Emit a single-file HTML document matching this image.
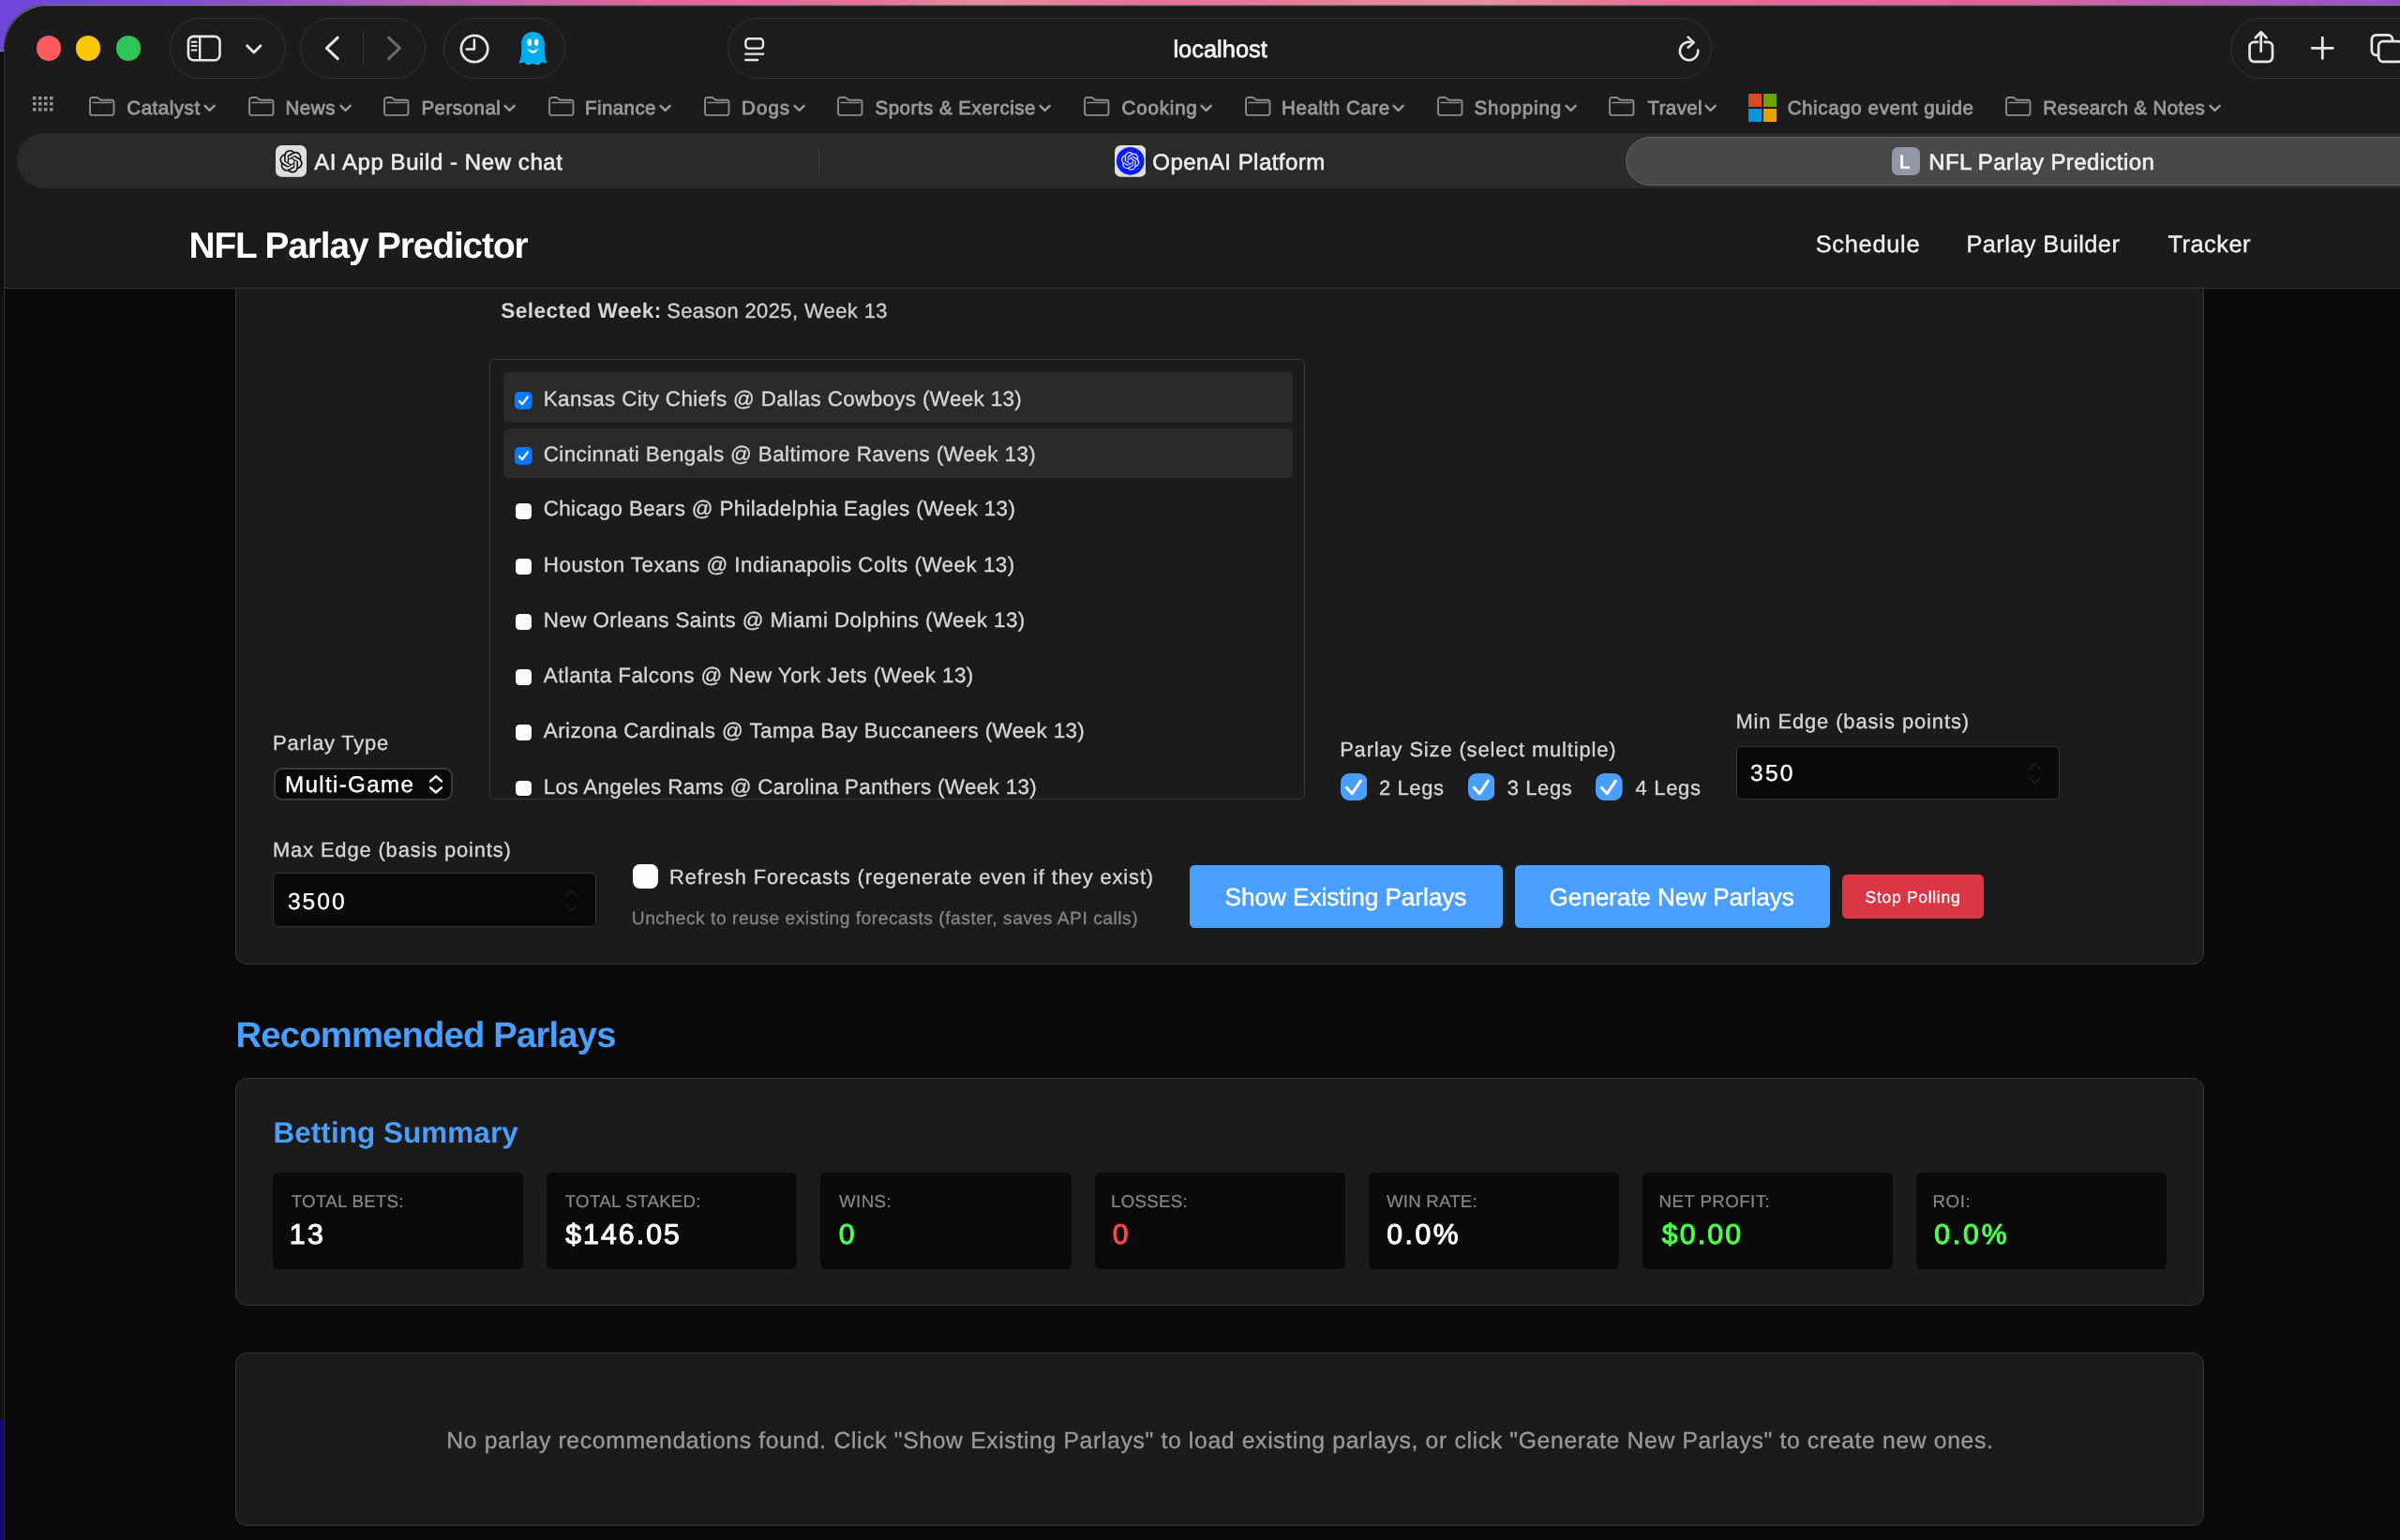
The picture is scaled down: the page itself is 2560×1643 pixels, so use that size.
<!DOCTYPE html>
<html lang="en"><head><meta charset="utf-8"><title>NFL Parlay Prediction</title>
<style>
*{margin:0;padding:0}
html,body{width:2560px;height:1643px;overflow:hidden;background:#0a0a0a}
body{position:relative;font-family:"Liberation Sans", Arial, sans-serif}
#root{position:absolute;left:0;top:0;width:2560px;height:1643px;overflow:hidden;will-change:transform}
#root div,#root span,#root svg,#root i,#root section,#root header,#root button,#root label,#root h1,#root h2,#root h3,#root a,#root p,#root strong{position:absolute;display:block}
button{border:0;padding:0;font:inherit;background:none;text-align:left;overflow:visible}
a{text-decoration:none}
#toolbar,#bookmarks,#tabbar,#page,#nav{left:0;top:0;width:0;height:0}
.t{white-space:pre;line-height:1;font-style:normal;text-rendering:geometricPrecision}
#desk{left:0;top:0;width:2560px;height:1643px;background:#141414}
#desk .grad{left:0;top:0;width:2560px;height:56px;background:linear-gradient(90deg,#6e47da 0,#7a4bd6 6%,#a758be 15%,#e0659c 26%,#e8709a 36%,#ea8a9e 41%,#e8709a 48%,#ea8c9c 62%,#e86c96 70%,#e0649e 84%,#b257c0 93%,#9a4fd0 100%)}
#desk .lstrip{left:0;top:54px;width:8px;height:1462px;background:#101010}
#desk .lline{left:0;top:53.500px;width:8px;height:1.200px;background:#9a9a9a}
#desk .lblue{left:0;top:1515px;width:8px;height:130px;background:#12087a}
#win{left:4.800px;top:4.600px;width:2700px;height:1800px;border-radius:45px;background:#1b1b1b;box-shadow:inset 0 1.200px 0 rgba(255,255,255,.42), -1px 0 0 #2e2e2e}
.tl{top:38.300px;width:26.600px;height:26.600px;border-radius:50%}
.ms{width:30px;height:30px}
.ms i{width:14.200px;height:14.200px}
.ms i:nth-child(2){left:15.800px}
.ms i:nth-child(3){top:15.800px}
.ms i:nth-child(4){left:15.800px;top:15.800px}
#pagebg{left:4.800px;top:260px;width:2560px;height:1500px;background:#0a0a0a}
#navbg{left:4.800px;top:201.600px;width:2560px;height:105px;background:#1b1b1b;border-bottom:1.800px solid #353535;box-sizing:content-box}
.card{background:#1b1b1b;border:1.600px solid #343434;border-radius:12px;box-sizing:border-box}
#card1{left:251.400px;top:250px;width:2099.600px;height:779.300px}
#card2{left:251.400px;top:1149.600px;width:2099.600px;height:243.600px}
#card3{left:251.400px;top:1443px;width:2099.600px;height:184.600px}
</style></head>
<body><div id="root">
<div id="desk"><div class="grad"></div><div class="lstrip"></div><div class="lline"></div><div class="lblue"></div></div>
<div id="win"></div>
<div id="toolbar">
<i class="tl" style="left:38.5px;background:#ff5a5e"></i>
<i class="tl" style="left:80.9px;background:#fcc803"></i>
<i class="tl" style="left:123.5px;background:#30c456"></i>
<div class="pill" style="left:181.0px;top:18.6px;width:124.0px;height:65.8px;border:1.6px solid #323232;border-radius:34px;box-sizing:border-box;background:#1c1c1c;"></div>
<div class="pill" style="left:320.0px;top:18.6px;width:134.4px;height:65.8px;border:1.6px solid #323232;border-radius:34px;box-sizing:border-box;background:#1c1c1c;"></div>
<div class="pill" style="left:473.0px;top:18.6px;width:129.8px;height:65.8px;border:1.6px solid #323232;border-radius:34px;box-sizing:border-box;background:#1c1c1c;"></div>
<div class="pill" style="left:776.0px;top:18.6px;width:1049.6px;height:65.8px;border:1.6px solid #323232;border-radius:34px;box-sizing:border-box;background:#1c1c1c;"></div>
<div class="pill" style="left:2379.0px;top:18.6px;width:281.0px;height:65.8px;border:1.6px solid #323232;border-radius:34px;box-sizing:border-box;background:#1c1c1c;"></div>
<svg style="left:196.0px;top:34.0px;" width="44" height="36" viewBox="0 0 44 36" fill="none"><rect x="4.9" y="4.9" width="33.6" height="25.4" rx="5.5" stroke="#e6e6e6" stroke-width="2.6"/><path d="M17.2 5v25.3" stroke="#e6e6e6" stroke-width="2.4"/><path d="M8.6 10.8h5M8.6 15.1h5M8.6 19.4h5" stroke="#e6e6e6" stroke-width="2" stroke-linecap="round"/></svg>
<svg style="left:258.0px;top:42.0px;" width="26" height="20" viewBox="0 0 26 20" fill="none"><path d="M5.6 6.8l7.2 7.2 7.2-7.2" stroke="#e6e6e6" stroke-width="2.8" stroke-linecap="round" stroke-linejoin="round"/></svg>
<svg style="left:340.0px;top:32.0px;" width="30" height="40" viewBox="0 0 30 40" fill="none"><path d="M20.2 8.2L8.4 19.4 20.2 30.6" stroke="#e6e6e6" stroke-width="3" stroke-linecap="round" stroke-linejoin="round"/></svg>
<div style="left:386.5px;top:33.5px;width:1.5px;height:36.2px;background:#343434;"></div>
<svg style="left:405.0px;top:32.0px;" width="30" height="40" viewBox="0 0 30 40" fill="none"><path d="M9.6 8.2L21.4 19.4 9.6 30.6" stroke="#6a6a6a" stroke-width="3" stroke-linecap="round" stroke-linejoin="round"/></svg>
<svg style="left:486.0px;top:32.0px;" width="40" height="40" viewBox="0 0 40 40" fill="none"><circle cx="20.1" cy="20" r="14.2" stroke="#e6e6e6" stroke-width="2.7"/><path d="M19.9 10.4v10.2h-8.2" stroke="#e6e6e6" stroke-width="2.5" stroke-linecap="round" stroke-linejoin="round"/></svg>
<svg style="left:540.0px;top:26.0px;" width="60" height="52" viewBox="0 0 60 52" fill="none"><path d="M28.5 7.9C21.300 7.9 16.200 13 16.200 20.600V29c0 4.500-1.200 8.800-2.700 11.900q3 .7 5.700-.7 1.800 3.200 4.300 3 2.500 0 5-1.100 2.500 1.100 4.900 1.100 2.600.2 4.300-3 2.800 1.400 5.700.7c-1.400-3.100-2.600-7.400-2.600-11.900V20.600C40.800 13 35.700 7.900 28.500 7.900z" fill="#00aef0"/><ellipse cx="24.800" cy="19.200" rx="2.250" ry="3.750" fill="#fff"/><ellipse cx="32.200" cy="19.200" rx="2.250" ry="3.750" fill="#fff"/><path d="M22.300 25.300Q28.500 36.500 34.800 25.300 28.500 31.100 22.300 25.300z" fill="#fff"/></svg>
<svg style="left:790.0px;top:36.0px;" width="30" height="34" viewBox="0 0 30 34" fill="none"><rect x="5.400" y="5.300" width="18.600" height="10.300" rx="3.200" stroke="#e6e6e6" stroke-width="2.4"/><path d="M5.200 21.700h19M5.200 28h13" stroke="#e6e6e6" stroke-width="2.300" stroke-linecap="round"/></svg>
<span class="t" id="t1" style="left:1251.40px;top:41.10px;font-size:25.4px;font-weight:400;color:#f4f4f4;letter-spacing:0.025px;-webkit-text-stroke:0.70px #f4f4f4;">localhost</span>
<svg style="left:1786.0px;top:34.0px;" width="32" height="36" viewBox="0 0 32 36" fill="none"><path d="M25.200 19.400A9.700 9.700 0 1 1 17.300 10.900" stroke="#e6e6e6" stroke-width="2.500" stroke-linecap="round"/><path d="M14.600 5.600l6.200 5.800-6.200 5.400" stroke="#e6e6e6" stroke-width="2.500" stroke-linecap="round" stroke-linejoin="round"/></svg>
<svg style="left:2394.0px;top:30.0px;" width="36" height="42" viewBox="0 0 36 42" fill="none"><path d="M14.200 14.800H10.400a4.800 4.800 0 0 0-4.800 4.800v11.500a4.800 4.800 0 0 0 4.800 4.800h14.800a4.800 4.800 0 0 0 4.800-4.800V19.600a4.800 4.800 0 0 0-4.800-4.800H21.600" stroke="#e6e6e6" stroke-width="2.700" stroke-linecap="round"/><path d="M17.700 25V4.600M11.800 10.200l5.900-5.900 5.900 5.900" stroke="#e6e6e6" stroke-width="2.700" stroke-linecap="round" stroke-linejoin="round"/></svg>
<svg style="left:2460.0px;top:34.0px;" width="34" height="34" viewBox="0 0 34 34" fill="none"><path d="M17.300 6.200v22.200M6.200 17.300h22.200" stroke="#e6e6e6" stroke-width="2.800" stroke-linecap="round"/></svg>
<svg style="left:2524.0px;top:32.0px;" width="40" height="40" viewBox="0 0 40 40" fill="none"><path d="M13.150 26.850H10.650a4.800 4.800 0 0 1-4.800-4.800V10.150a4.800 4.800 0 0 1 4.800-4.800H23.150a4.800 4.800 0 0 1 4.800 4.800V12.050" stroke="#e6e6e6" stroke-width="2.700"/><rect x="13.150" y="12.050" width="26" height="21.850" rx="4.800" stroke="#e6e6e6" stroke-width="2.700"/></svg>
</div>
<div id="bookmarks">
<svg style="left:34.9px;top:102.8px;" width="24" height="18" viewBox="0 0 24 18" fill="none"><g fill="#929292"><rect x="0.0" y="0.0" width="3.500" height="3.500"/><rect x="6.0" y="0.0" width="3.500" height="3.500"/><rect x="12.0" y="0.0" width="3.500" height="3.500"/><rect x="18.0" y="0.0" width="3.500" height="3.500"/><rect x="0.0" y="6.0" width="3.500" height="3.500"/><rect x="6.0" y="6.0" width="3.500" height="3.500"/><rect x="12.0" y="6.0" width="3.500" height="3.500"/><rect x="18.0" y="6.0" width="3.500" height="3.500"/><rect x="0.0" y="12.1" width="3.500" height="3.500"/><rect x="6.0" y="12.1" width="3.500" height="3.500"/><rect x="12.0" y="12.1" width="3.500" height="3.500"/><rect x="18.0" y="12.1" width="3.500" height="3.500"/></g></svg>
<svg style="left:94.0px;top:102.0px;" width="31" height="24" viewBox="0 0 31 24" fill="none"><path d="M2.050 6.500V4.400a2.450 2.450 0 0 1 2.450-2.450h4.300c.9 0 1.600.3 2.200.9l1 .9c.6.600 1.300.95 2.200.95h10.800a2.450 2.450 0 0 1 2.450 2.450v11.250a2.450 2.450 0 0 1-2.450 2.450H4.500a2.450 2.450 0 0 1-2.450-2.450z" stroke="#8a8a8a" stroke-width="1.900"/><path d="M5 7.500h20" stroke="#8a8a8a" stroke-width="1.600" stroke-linecap="round"/></svg>
<span class="t" id="t2" style="left:135.30px;top:105.65px;font-size:20.5px;font-weight:400;color:#999999;letter-spacing:0.536px;-webkit-text-stroke:0.80px #999999;">Catalyst</span>
<svg style="left:217.2px;top:111.0px;" width="16" height="12" viewBox="0 0 16 12" fill="none"><path d="M1.600 1.800l5 5 5-5" stroke="#9a9a9a" stroke-width="2.500" stroke-linecap="round" stroke-linejoin="round"/></svg>
<svg style="left:263.9px;top:102.0px;" width="31" height="24" viewBox="0 0 31 24" fill="none"><path d="M2.050 6.500V4.400a2.450 2.450 0 0 1 2.450-2.450h4.300c.9 0 1.600.3 2.200.9l1 .9c.6.600 1.300.95 2.200.95h10.800a2.450 2.450 0 0 1 2.450 2.450v11.250a2.450 2.450 0 0 1-2.450 2.450H4.500a2.450 2.450 0 0 1-2.450-2.450z" stroke="#8a8a8a" stroke-width="1.900"/><path d="M5 7.500h20" stroke="#8a8a8a" stroke-width="1.600" stroke-linecap="round"/></svg>
<span class="t" id="t3" style="left:304.40px;top:105.65px;font-size:20.5px;font-weight:400;color:#999999;letter-spacing:0.600px;-webkit-text-stroke:0.80px #999999;">News</span>
<svg style="left:361.9px;top:111.0px;" width="16" height="12" viewBox="0 0 16 12" fill="none"><path d="M1.600 1.800l5 5 5-5" stroke="#9a9a9a" stroke-width="2.500" stroke-linecap="round" stroke-linejoin="round"/></svg>
<svg style="left:407.9px;top:102.0px;" width="31" height="24" viewBox="0 0 31 24" fill="none"><path d="M2.050 6.500V4.400a2.450 2.450 0 0 1 2.450-2.450h4.300c.9 0 1.600.3 2.200.9l1 .9c.6.600 1.300.95 2.200.95h10.800a2.450 2.450 0 0 1 2.450 2.450v11.250a2.450 2.450 0 0 1-2.450 2.450H4.500a2.450 2.450 0 0 1-2.450-2.450z" stroke="#8a8a8a" stroke-width="1.900"/><path d="M5 7.500h20" stroke="#8a8a8a" stroke-width="1.600" stroke-linecap="round"/></svg>
<span class="t" id="t4" style="left:449.40px;top:105.65px;font-size:20.5px;font-weight:400;color:#999999;letter-spacing:0.507px;-webkit-text-stroke:0.80px #999999;">Personal</span>
<svg style="left:536.5px;top:111.0px;" width="16" height="12" viewBox="0 0 16 12" fill="none"><path d="M1.600 1.800l5 5 5-5" stroke="#9a9a9a" stroke-width="2.500" stroke-linecap="round" stroke-linejoin="round"/></svg>
<svg style="left:583.9px;top:102.0px;" width="31" height="24" viewBox="0 0 31 24" fill="none"><path d="M2.050 6.500V4.400a2.450 2.450 0 0 1 2.450-2.450h4.300c.9 0 1.600.3 2.200.9l1 .9c.6.600 1.300.95 2.200.95h10.800a2.450 2.450 0 0 1 2.450 2.450v11.250a2.450 2.450 0 0 1-2.450 2.450H4.500a2.450 2.450 0 0 1-2.450-2.450z" stroke="#8a8a8a" stroke-width="1.900"/><path d="M5 7.500h20" stroke="#8a8a8a" stroke-width="1.600" stroke-linecap="round"/></svg>
<span class="t" id="t5" style="left:624.10px;top:105.65px;font-size:20.5px;font-weight:400;color:#999999;letter-spacing:0.408px;-webkit-text-stroke:0.80px #999999;">Finance</span>
<svg style="left:703.2px;top:111.0px;" width="16" height="12" viewBox="0 0 16 12" fill="none"><path d="M1.600 1.800l5 5 5-5" stroke="#9a9a9a" stroke-width="2.500" stroke-linecap="round" stroke-linejoin="round"/></svg>
<svg style="left:749.9px;top:102.0px;" width="31" height="24" viewBox="0 0 31 24" fill="none"><path d="M2.050 6.500V4.400a2.450 2.450 0 0 1 2.450-2.450h4.300c.9 0 1.600.3 2.200.9l1 .9c.6.600 1.300.95 2.200.95h10.800a2.450 2.450 0 0 1 2.450 2.450v11.250a2.450 2.450 0 0 1-2.450 2.450H4.500a2.450 2.450 0 0 1-2.450-2.450z" stroke="#8a8a8a" stroke-width="1.900"/><path d="M5 7.500h20" stroke="#8a8a8a" stroke-width="1.600" stroke-linecap="round"/></svg>
<span class="t" id="t6" style="left:791.10px;top:105.65px;font-size:20.5px;font-weight:400;color:#999999;letter-spacing:1.050px;-webkit-text-stroke:0.80px #999999;">Dogs</span>
<svg style="left:846.2px;top:111.0px;" width="16" height="12" viewBox="0 0 16 12" fill="none"><path d="M1.600 1.800l5 5 5-5" stroke="#9a9a9a" stroke-width="2.500" stroke-linecap="round" stroke-linejoin="round"/></svg>
<svg style="left:892.2px;top:102.0px;" width="31" height="24" viewBox="0 0 31 24" fill="none"><path d="M2.050 6.500V4.400a2.450 2.450 0 0 1 2.450-2.450h4.300c.9 0 1.600.3 2.200.9l1 .9c.6.600 1.300.95 2.200.95h10.800a2.450 2.450 0 0 1 2.450 2.450v11.250a2.450 2.450 0 0 1-2.450 2.450H4.500a2.450 2.450 0 0 1-2.450-2.450z" stroke="#8a8a8a" stroke-width="1.900"/><path d="M5 7.500h20" stroke="#8a8a8a" stroke-width="1.600" stroke-linecap="round"/></svg>
<span class="t" id="t7" style="left:933.50px;top:105.65px;font-size:20.5px;font-weight:400;color:#999999;letter-spacing:0.500px;-webkit-text-stroke:0.80px #999999;">Sports &amp; Exercise</span>
<svg style="left:1107.9px;top:111.0px;" width="16" height="12" viewBox="0 0 16 12" fill="none"><path d="M1.600 1.800l5 5 5-5" stroke="#9a9a9a" stroke-width="2.500" stroke-linecap="round" stroke-linejoin="round"/></svg>
<svg style="left:1154.9px;top:102.0px;" width="31" height="24" viewBox="0 0 31 24" fill="none"><path d="M2.050 6.500V4.400a2.450 2.450 0 0 1 2.450-2.450h4.300c.9 0 1.600.3 2.200.9l1 .9c.6.600 1.300.95 2.200.95h10.800a2.450 2.450 0 0 1 2.450 2.450v11.250a2.450 2.450 0 0 1-2.450 2.450H4.500a2.450 2.450 0 0 1-2.450-2.450z" stroke="#8a8a8a" stroke-width="1.900"/><path d="M5 7.500h20" stroke="#8a8a8a" stroke-width="1.600" stroke-linecap="round"/></svg>
<span class="t" id="t8" style="left:1196.60px;top:105.65px;font-size:20.5px;font-weight:400;color:#999999;letter-spacing:0.825px;-webkit-text-stroke:0.80px #999999;">Cooking</span>
<svg style="left:1280.2px;top:111.0px;" width="16" height="12" viewBox="0 0 16 12" fill="none"><path d="M1.600 1.800l5 5 5-5" stroke="#9a9a9a" stroke-width="2.500" stroke-linecap="round" stroke-linejoin="round"/></svg>
<svg style="left:1326.6px;top:102.0px;" width="31" height="24" viewBox="0 0 31 24" fill="none"><path d="M2.050 6.500V4.400a2.450 2.450 0 0 1 2.450-2.450h4.300c.9 0 1.600.3 2.200.9l1 .9c.6.600 1.300.95 2.200.95h10.800a2.450 2.450 0 0 1 2.450 2.450v11.250a2.450 2.450 0 0 1-2.450 2.450H4.500a2.450 2.450 0 0 1-2.450-2.450z" stroke="#8a8a8a" stroke-width="1.900"/><path d="M5 7.500h20" stroke="#8a8a8a" stroke-width="1.600" stroke-linecap="round"/></svg>
<span class="t" id="t9" style="left:1367.10px;top:105.65px;font-size:20.5px;font-weight:400;color:#999999;letter-spacing:0.565px;-webkit-text-stroke:0.80px #999999;">Health Care</span>
<svg style="left:1485.2px;top:111.0px;" width="16" height="12" viewBox="0 0 16 12" fill="none"><path d="M1.600 1.800l5 5 5-5" stroke="#9a9a9a" stroke-width="2.500" stroke-linecap="round" stroke-linejoin="round"/></svg>
<svg style="left:1531.9px;top:102.0px;" width="31" height="24" viewBox="0 0 31 24" fill="none"><path d="M2.050 6.500V4.400a2.450 2.450 0 0 1 2.450-2.450h4.300c.9 0 1.600.3 2.200.9l1 .9c.6.600 1.300.95 2.200.95h10.800a2.450 2.450 0 0 1 2.450 2.450v11.250a2.450 2.450 0 0 1-2.450 2.450H4.500a2.450 2.450 0 0 1-2.450-2.450z" stroke="#8a8a8a" stroke-width="1.900"/><path d="M5 7.500h20" stroke="#8a8a8a" stroke-width="1.600" stroke-linecap="round"/></svg>
<span class="t" id="t10" style="left:1572.55px;top:105.65px;font-size:20.5px;font-weight:400;color:#999999;letter-spacing:0.843px;-webkit-text-stroke:0.80px #999999;">Shopping</span>
<svg style="left:1668.7px;top:111.0px;" width="16" height="12" viewBox="0 0 16 12" fill="none"><path d="M1.600 1.800l5 5 5-5" stroke="#9a9a9a" stroke-width="2.500" stroke-linecap="round" stroke-linejoin="round"/></svg>
<svg style="left:1714.8px;top:102.0px;" width="31" height="24" viewBox="0 0 31 24" fill="none"><path d="M2.050 6.500V4.400a2.450 2.450 0 0 1 2.450-2.450h4.300c.9 0 1.600.3 2.200.9l1 .9c.6.600 1.300.95 2.200.95h10.800a2.450 2.450 0 0 1 2.450 2.450v11.250a2.450 2.450 0 0 1-2.450 2.450H4.500a2.450 2.450 0 0 1-2.450-2.450z" stroke="#8a8a8a" stroke-width="1.900"/><path d="M5 7.500h20" stroke="#8a8a8a" stroke-width="1.600" stroke-linecap="round"/></svg>
<span class="t" id="t11" style="left:1757.50px;top:105.65px;font-size:20.5px;font-weight:400;color:#999999;letter-spacing:0.390px;-webkit-text-stroke:0.80px #999999;">Travel</span>
<svg style="left:1818.0px;top:111.0px;" width="16" height="12" viewBox="0 0 16 12" fill="none"><path d="M1.600 1.800l5 5 5-5" stroke="#9a9a9a" stroke-width="2.500" stroke-linecap="round" stroke-linejoin="round"/></svg>
<div class="ms" style="left:1864.9px;top:99.8px"><i style="background:#d84a20"></i><i style="background:#6ca204"></i><i style="background:#0596d8"></i><i style="background:#e0a204"></i></div>
<span class="t" id="t12" style="left:1906.65px;top:105.65px;font-size:20.5px;font-weight:400;color:#999999;letter-spacing:0.631px;-webkit-text-stroke:0.80px #999999;">Chicago event guide</span>
<svg style="left:2138.3px;top:102.0px;" width="31" height="24" viewBox="0 0 31 24" fill="none"><path d="M2.050 6.500V4.400a2.450 2.450 0 0 1 2.450-2.450h4.300c.9 0 1.600.3 2.200.9l1 .9c.6.600 1.300.95 2.200.95h10.800a2.450 2.450 0 0 1 2.450 2.450v11.250a2.450 2.450 0 0 1-2.450 2.450H4.500a2.450 2.450 0 0 1-2.450-2.450z" stroke="#8a8a8a" stroke-width="1.900"/><path d="M5 7.500h20" stroke="#8a8a8a" stroke-width="1.600" stroke-linecap="round"/></svg>
<span class="t" id="t13" style="left:2179.25px;top:105.65px;font-size:20.5px;font-weight:400;color:#999999;letter-spacing:0.410px;-webkit-text-stroke:0.80px #999999;">Research &amp; Notes</span>
<svg style="left:2356.0px;top:111.0px;" width="16" height="12" viewBox="0 0 16 12" fill="none"><path d="M1.600 1.800l5 5 5-5" stroke="#9a9a9a" stroke-width="2.500" stroke-linecap="round" stroke-linejoin="round"/></svg>
</div>
<div id="tabbar">
<div style="left:18.0px;top:142.3px;width:2642.0px;height:58.9px;background:#2a2a2a;border-radius:29.400px;"></div>
<div style="left:872.5px;top:157.0px;width:1.5px;height:30.0px;background:#3e3e3e;"></div>
<div style="left:1733.6px;top:146.0px;width:926.4px;height:52.0px;background:#484848;border:1.5px solid #656565;border-radius:26px;box-sizing:border-box;"></div>
<svg style="left:294.0px;top:155.0px;" width="33" height="33.7" viewBox="0 0 33 33.7" fill="none"><rect width="33" height="33.700" rx="6.500" fill="#dedede"/><g transform="translate(4.300 5) scale(1.020)"><path d="M22.2819 9.8211a5.9847 5.9847 0 0 0-.5157-4.9108 6.0462 6.0462 0 0 0-6.5098-2.9A6.0651 6.0651 0 0 0 4.9807 4.1818a5.9847 5.9847 0 0 0-3.9977 2.9 6.0462 6.0462 0 0 0 .7427 7.0966 5.98 5.98 0 0 0 .511 4.9107 6.051 6.051 0 0 0 6.5146 2.9001A5.9847 5.9847 0 0 0 13.2599 24a6.0557 6.0557 0 0 0 5.7718-4.2058 5.9894 5.9894 0 0 0 3.9977-2.9001 6.0557 6.0557 0 0 0-.7475-7.0729zm-9.022 12.6081a4.4755 4.4755 0 0 1-2.8764-1.0408l.1419-.0804 4.7783-2.7582a.7948.7948 0 0 0 .3927-.6813v-6.7369l2.02 1.1686a.071.071 0 0 1 .038.052v5.5826a4.504 4.504 0 0 1-4.4945 4.4944zm-9.6607-4.1254a4.4708 4.4708 0 0 1-.5346-3.0137l.142.0852 4.783 2.7582a.7712.7712 0 0 0 .7806 0l5.8428-3.3685v2.3324a.0804.0804 0 0 1-.0332.0615L9.74 19.9502a4.4992 4.4992 0 0 1-6.1408-1.6464zM2.3408 7.8956a4.485 4.485 0 0 1 2.3655-1.9728V11.6a.7664.7664 0 0 0 .3879.6765l5.8144 3.3543-2.0201 1.1685a.0757.0757 0 0 1-.071 0l-4.8303-2.7865A4.504 4.504 0 0 1 2.3408 7.872zm16.5963 3.8558L13.1038 8.364 15.1192 7.2a.0757.0757 0 0 1 .071 0l4.8303 2.7913a4.4944 4.4944 0 0 1-.6765 8.1042v-5.6772a.79.79 0 0 0-.407-.667zm2.0107-3.0231l-.142-.0852-4.7735-2.7818a.7759.7759 0 0 0-.7854 0L9.409 9.2297V6.8974a.0662.0662 0 0 1 .0284-.0615l4.8303-2.7866a4.4992 4.4992 0 0 1 6.6802 4.66zM8.3065 12.863l-2.02-1.1638a.0804.0804 0 0 1-.038-.0567V6.0742a4.4992 4.4992 0 0 1 7.3757-3.4537l-.142.0805L8.704 5.459a.7948.7948 0 0 0-.3927.6813zm1.0976-2.3654l2.602-1.4998 2.6069 1.4998v2.9994l-2.5974 1.4997-2.6067-1.4997Z" fill="#111"/></g></svg>
<span class="t" id="t14" style="left:335.25px;top:162.18px;font-size:24.0px;font-weight:400;color:#ececec;letter-spacing:0.568px;-webkit-text-stroke:0.60px #ececec;">AI App Build - New chat</span>
<svg style="left:1188.5px;top:155.0px;" width="33.5" height="33.7" viewBox="0 0 33.5 33.7" fill="none"><rect width="33.500" height="33.700" rx="6.500" fill="#dedede"/><circle cx="16.700" cy="16.850" r="14.850" fill="#0a1cff"/><g transform="translate(7 7.100) scale(0.810)"><path d="M22.2819 9.8211a5.9847 5.9847 0 0 0-.5157-4.9108 6.0462 6.0462 0 0 0-6.5098-2.9A6.0651 6.0651 0 0 0 4.9807 4.1818a5.9847 5.9847 0 0 0-3.9977 2.9 6.0462 6.0462 0 0 0 .7427 7.0966 5.98 5.98 0 0 0 .511 4.9107 6.051 6.051 0 0 0 6.5146 2.9001A5.9847 5.9847 0 0 0 13.2599 24a6.0557 6.0557 0 0 0 5.7718-4.2058 5.9894 5.9894 0 0 0 3.9977-2.9001 6.0557 6.0557 0 0 0-.7475-7.0729zm-9.022 12.6081a4.4755 4.4755 0 0 1-2.8764-1.0408l.1419-.0804 4.7783-2.7582a.7948.7948 0 0 0 .3927-.6813v-6.7369l2.02 1.1686a.071.071 0 0 1 .038.052v5.5826a4.504 4.504 0 0 1-4.4945 4.4944zm-9.6607-4.1254a4.4708 4.4708 0 0 1-.5346-3.0137l.142.0852 4.783 2.7582a.7712.7712 0 0 0 .7806 0l5.8428-3.3685v2.3324a.0804.0804 0 0 1-.0332.0615L9.74 19.9502a4.4992 4.4992 0 0 1-6.1408-1.6464zM2.3408 7.8956a4.485 4.485 0 0 1 2.3655-1.9728V11.6a.7664.7664 0 0 0 .3879.6765l5.8144 3.3543-2.0201 1.1685a.0757.0757 0 0 1-.071 0l-4.8303-2.7865A4.504 4.504 0 0 1 2.3408 7.872zm16.5963 3.8558L13.1038 8.364 15.1192 7.2a.0757.0757 0 0 1 .071 0l4.8303 2.7913a4.4944 4.4944 0 0 1-.6765 8.1042v-5.6772a.79.79 0 0 0-.407-.667zm2.0107-3.0231l-.142-.0852-4.7735-2.7818a.7759.7759 0 0 0-.7854 0L9.409 9.2297V6.8974a.0662.0662 0 0 1 .0284-.0615l4.8303-2.7866a4.4992 4.4992 0 0 1 6.6802 4.66zM8.3065 12.863l-2.02-1.1638a.0804.0804 0 0 1-.038-.0567V6.0742a4.4992 4.4992 0 0 1 7.3757-3.4537l-.142.0805L8.704 5.459a.7948.7948 0 0 0-.3927.6813zm1.0976-2.3654l2.602-1.4998 2.6069 1.4998v2.9994l-2.5974 1.4997-2.6067-1.4997Z" fill="#dfe3ff"/></g></svg>
<span class="t" id="t15" style="left:1229.35px;top:162.18px;font-size:24.0px;font-weight:400;color:#ececec;letter-spacing:0.461px;-webkit-text-stroke:0.60px #ececec;">OpenAI Platform</span>
<div style="left:2018.3px;top:157.0px;width:29.4px;height:29.7px;background:#9496a6;border-radius:6.500px;"></div>
<span class="t" id="t16" style="left:2026.35px;top:162.32px;font-size:21.6px;font-weight:700;color:#ffffff;transform:scaleX(.88);transform-origin:0 0;">L</span>
<span class="t" id="t17" style="left:2057.15px;top:162.18px;font-size:24.0px;font-weight:400;color:#f0f0f0;letter-spacing:0.403px;-webkit-text-stroke:0.60px #f0f0f0;">NFL Parlay Prediction</span>
</div>
<div id="page"><div id="pagebg"></div>
<section id="card1" class="card">
</section>
<strong class="t" id="t18" style="left:534.25px;top:320.87px;font-size:22.6px;font-weight:700;color:#d6d6d6;letter-spacing:0.446px;">Selected Week:</strong>
<span class="t" id="t19" style="left:711.20px;top:320.96px;font-size:21.9px;font-weight:400;color:#cfcfcf;letter-spacing:0.426px;-webkit-text-stroke:0.35px #cfcfcf;">Season 2025, Week 13</span>
<div class="listbox" style="left:522.0px;top:383.0px;width:870.0px;height:470.4px;border:1.600px solid #3a3a3a;border-radius:5.400px;box-sizing:border-box;"></div>
<label class="row" style="left:537.0px;top:397.4px;width:841.5px;height:53.3px;border-radius:5.4px;background:#2a2a2a;">
<svg style="left:12.0px;top:20.4px;" width="19" height="19" viewBox="0 0 19 19" fill="none"><rect width="18.700" height="18.700" rx="4.800" fill="#0a7aff"/><path d="M4.900 9.800l3.100 3.500 5.800-7.800" stroke="#fff" stroke-width="2.200" stroke-linecap="round" stroke-linejoin="round"/></svg>
<span class="t" id="t20" style="left:42.80px;top:17.24px;font-size:22.4px;font-weight:400;color:#d6d6d6;letter-spacing:0.364px;-webkit-text-stroke:0.35px #d6d6d6;">Kansas City Chiefs @ Dallas Cowboys (Week 13)</span>
</label>
<label class="row" style="left:537.0px;top:456.5px;width:841.5px;height:53.3px;border-radius:5.4px;background:#2a2a2a;">
<svg style="left:12.0px;top:20.4px;" width="19" height="19" viewBox="0 0 19 19" fill="none"><rect width="18.700" height="18.700" rx="4.800" fill="#0a7aff"/><path d="M4.900 9.800l3.100 3.500 5.800-7.800" stroke="#fff" stroke-width="2.200" stroke-linecap="round" stroke-linejoin="round"/></svg>
<span class="t" id="t21" style="left:42.80px;top:17.52px;font-size:22.4px;font-weight:400;color:#d6d6d6;letter-spacing:0.402px;-webkit-text-stroke:0.35px #d6d6d6;">Cincinnati Bengals @ Baltimore Ravens (Week 13)</span>
</label>
<label class="row" style="left:537.0px;top:515.7px;width:841.5px;height:53.3px;border-radius:5.4px;">
<div class="cb" style="left:13.0px;top:21.3px;width:16.6px;height:16.6px;background:#fbfbfb;border-radius:4.300px;"></div>
<span class="t" id="t22" style="left:42.80px;top:16.80px;font-size:22.4px;font-weight:400;color:#d6d6d6;letter-spacing:0.347px;-webkit-text-stroke:0.35px #d6d6d6;">Chicago Bears @ Philadelphia Eagles (Week 13)</span>
</label>
<label class="row" style="left:537.0px;top:574.8px;width:841.5px;height:53.3px;border-radius:5.4px;">
<div class="cb" style="left:13.0px;top:21.3px;width:16.6px;height:16.6px;background:#fbfbfb;border-radius:4.300px;"></div>
<span class="t" id="t23" style="left:42.80px;top:17.08px;font-size:22.4px;font-weight:400;color:#d6d6d6;letter-spacing:0.483px;-webkit-text-stroke:0.35px #d6d6d6;">Houston Texans @ Indianapolis Colts (Week 13)</span>
</label>
<label class="row" style="left:537.0px;top:634.0px;width:841.5px;height:53.3px;border-radius:5.4px;">
<div class="cb" style="left:13.0px;top:21.3px;width:16.6px;height:16.6px;background:#fbfbfb;border-radius:4.300px;"></div>
<span class="t" id="t24" style="left:42.80px;top:17.36px;font-size:22.4px;font-weight:400;color:#d6d6d6;letter-spacing:0.415px;-webkit-text-stroke:0.35px #d6d6d6;">New Orleans Saints @ Miami Dolphins (Week 13)</span>
</label>
<label class="row" style="left:537.0px;top:693.1px;width:841.5px;height:53.3px;border-radius:5.4px;">
<div class="cb" style="left:13.0px;top:21.3px;width:16.6px;height:16.6px;background:#fbfbfb;border-radius:4.300px;"></div>
<span class="t" id="t25" style="left:42.80px;top:16.64px;font-size:22.4px;font-weight:400;color:#d6d6d6;letter-spacing:0.450px;-webkit-text-stroke:0.35px #d6d6d6;">Atlanta Falcons @ New York Jets (Week 13)</span>
</label>
<label class="row" style="left:537.0px;top:752.2px;width:841.5px;height:53.3px;border-radius:5.4px;">
<div class="cb" style="left:13.0px;top:21.3px;width:16.6px;height:16.6px;background:#fbfbfb;border-radius:4.300px;"></div>
<span class="t" id="t26" style="left:42.80px;top:16.92px;font-size:22.4px;font-weight:400;color:#d6d6d6;letter-spacing:0.408px;-webkit-text-stroke:0.35px #d6d6d6;">Arizona Cardinals @ Tampa Bay Buccaneers (Week 13)</span>
</label>
<label class="row" style="left:537.0px;top:811.4px;width:841.5px;height:53.3px;border-radius:5.4px;">
<div class="cb" style="left:13.0px;top:21.3px;width:16.6px;height:16.6px;background:#fbfbfb;border-radius:4.300px;"></div>
<span class="t" id="t27" style="left:42.80px;top:17.20px;font-size:22.4px;font-weight:400;color:#d6d6d6;letter-spacing:0.350px;-webkit-text-stroke:0.35px #d6d6d6;">Los Angeles Rams @ Carolina Panthers (Week 13)</span>
</label>
<label class="t" id="t28" style="left:291.10px;top:782.16px;font-size:21.9px;font-weight:400;color:#d6d6d6;letter-spacing:0.785px;-webkit-text-stroke:0.35px #d6d6d6;">Parlay Type</label>
<div style="left:291.5px;top:819.0px;width:191.6px;height:34.6px;background:#090909;border:2px solid #3a3a3a;border-radius:9px;box-sizing:border-box;"></div>
<span class="t" id="t29" style="left:303.90px;top:825.81px;font-size:24.2px;font-weight:400;color:#ffffff;letter-spacing:1.339px;-webkit-text-stroke:0.35px #ffffff;">Multi-Game</span>
<svg style="left:455.0px;top:824.0px;" width="20" height="26" viewBox="0 0 20 26" fill="none"><path d="M4.100 9.400L10 4.300l5.900 5.100M4.100 16.400l5.900 5.100 5.900-5.100" stroke="#f0f0f0" stroke-width="2.500" stroke-linecap="round" stroke-linejoin="round"/></svg>
<label class="t" id="t30" style="left:1429.15px;top:789.06px;font-size:21.9px;font-weight:400;color:#d6d6d6;letter-spacing:0.873px;-webkit-text-stroke:0.35px #d6d6d6;">Parlay Size (select multiple)</label>
<svg style="left:1429.9px;top:825.0px;" width="28.6" height="29.1" viewBox="0 0 28.6 29.1" fill="none"><rect width="28.600" height="29.100" rx="9.600" fill="#4a9eff"/><path d="M6.300 15.300l5.900 6.500 9.100-13.600" stroke="#fff" stroke-width="3" stroke-linecap="round" stroke-linejoin="round"/></svg>
<span class="t" id="t31" style="left:1471.05px;top:829.86px;font-size:21.9px;font-weight:400;color:#d6d6d6;letter-spacing:0.630px;-webkit-text-stroke:0.35px #d6d6d6;">2 Legs</span>
<svg style="left:1565.6px;top:825.0px;" width="28.6" height="29.1" viewBox="0 0 28.6 29.1" fill="none"><rect width="28.600" height="29.100" rx="9.600" fill="#4a9eff"/><path d="M6.300 15.300l5.900 6.500 9.100-13.600" stroke="#fff" stroke-width="3" stroke-linecap="round" stroke-linejoin="round"/></svg>
<span class="t" id="t32" style="left:1607.65px;top:829.86px;font-size:21.9px;font-weight:400;color:#d6d6d6;letter-spacing:0.660px;-webkit-text-stroke:0.35px #d6d6d6;">3 Legs</span>
<svg style="left:1702.2px;top:825.0px;" width="28.6" height="29.1" viewBox="0 0 28.6 29.1" fill="none"><rect width="28.600" height="29.100" rx="9.600" fill="#4a9eff"/><path d="M6.300 15.300l5.900 6.500 9.100-13.600" stroke="#fff" stroke-width="3" stroke-linecap="round" stroke-linejoin="round"/></svg>
<span class="t" id="t33" style="left:1744.55px;top:829.86px;font-size:21.9px;font-weight:400;color:#d6d6d6;letter-spacing:0.730px;-webkit-text-stroke:0.35px #d6d6d6;">4 Legs</span>
<label class="t" id="t34" style="left:1851.45px;top:759.16px;font-size:21.9px;font-weight:400;color:#d6d6d6;letter-spacing:0.904px;-webkit-text-stroke:0.35px #d6d6d6;">Min Edge (basis points)</label>
<div style="left:1851.9px;top:795.7px;width:344.8px;height:57.7px;background:#090909;border:1.800px solid #343434;border-radius:6px;box-sizing:border-box;"></div>
<span class="t" id="t35" style="left:1867.10px;top:813.88px;font-size:24.6px;font-weight:400;color:#ffffff;letter-spacing:2.150px;-webkit-text-stroke:0.35px #ffffff;">350</span>
<svg style="left:2162.8px;top:811.7px;" width="15" height="26" viewBox="0 0 15 26" fill="none"><path d="M1.500 8.500l6-6 6 6M1.500 17.500l6 6 6-6" stroke="#191919" stroke-width="2" stroke-linecap="round" stroke-linejoin="round"/></svg>
<label class="t" id="t36" style="left:291.00px;top:895.96px;font-size:21.9px;font-weight:400;color:#d6d6d6;letter-spacing:0.866px;-webkit-text-stroke:0.35px #d6d6d6;">Max Edge (basis points)</label>
<div style="left:291.0px;top:931.2px;width:344.5px;height:58.0px;background:#090909;border:1.800px solid #343434;border-radius:6px;box-sizing:border-box;"></div>
<span class="t" id="t37" style="left:306.90px;top:950.68px;font-size:24.6px;font-weight:400;color:#ffffff;letter-spacing:2.017px;-webkit-text-stroke:0.35px #ffffff;">3500</span>
<svg style="left:601.5px;top:947.7px;" width="15" height="26" viewBox="0 0 15 26" fill="none"><path d="M1.500 8.500l6-6 6 6M1.500 17.500l6 6 6-6" stroke="#191919" stroke-width="2" stroke-linecap="round" stroke-linejoin="round"/></svg>
<div style="left:675.0px;top:921.7px;width:26.7px;height:26.3px;background:#fdfdfd;border-radius:7.500px;"></div>
<label class="t" id="t38" style="left:714.10px;top:925.46px;font-size:21.9px;font-weight:400;color:#d6d6d6;letter-spacing:0.865px;-webkit-text-stroke:0.35px #d6d6d6;">Refresh Forecasts (regenerate even if they exist)</label>
<span class="t" id="t39" style="left:673.75px;top:971.45px;font-size:19.2px;font-weight:400;color:#858585;letter-spacing:0.537px;-webkit-text-stroke:0.30px #858585;">Uncheck to reuse existing forecasts (faster, saves API calls)</span>
<button class="btn" type="button" style="left:1269.0px;top:923.0px;width:333.5px;height:66.5px;background:#4a9eff;border-radius:5.5px;"><span class="t" id="t40" style="left:37.50px;top:20.72px;font-size:26.2px;font-weight:400;color:#ffffff;letter-spacing:-0.058px;-webkit-text-stroke:0.40px #ffffff;">Show Existing Parlays</span></button>
<button class="btn" type="button" style="left:1615.6px;top:923.0px;width:336.2px;height:66.5px;background:#4a9eff;border-radius:5.5px;"><span class="t" id="t41" style="left:36.90px;top:20.72px;font-size:26.2px;font-weight:400;color:#ffffff;letter-spacing:-0.113px;-webkit-text-stroke:0.40px #ffffff;">Generate New Parlays</span></button>
<button class="btn" type="button" style="left:1965.0px;top:933.0px;width:150.6px;height:46.6px;background:#dc3545;border-radius:5.5px;"><span class="t" id="t42" style="left:24.60px;top:15.77px;font-size:17.4px;font-weight:400;color:#ffffff;letter-spacing:0.741px;-webkit-text-stroke:0.30px #ffffff;">Stop Polling</span></button>
<h2 class="t" id="t43" style="left:251.50px;top:1086.26px;font-size:38.2px;font-weight:700;color:#4a9eff;letter-spacing:-0.792px;">Recommended Parlays</h2>
<section id="card2" class="card"></section>
<h3 class="t" id="t44" style="left:291.50px;top:1192.82px;font-size:31.4px;font-weight:700;color:#4a9eff;letter-spacing:0.089px;">Betting Summary</h3>
<div class="stat" style="left:291.0px;top:1251px;width:267.3px;height:102.7px;background:#0a0a0a;border-radius:5.4px;"><span class="t" id="t45" style="left:19.75px;top:22.47px;font-size:18.7px;font-weight:400;color:#888888;letter-spacing:0.275px;-webkit-text-stroke:0.20px #888888;">TOTAL BETS:</span><strong class="t" id="t46" style="left:17.75px;top:52.44px;font-size:30.2px;font-weight:400;color:#ffffff;letter-spacing:2.500px;-webkit-text-stroke:1.05px #ffffff;">13</strong></div>
<div class="stat" style="left:583.2px;top:1251px;width:267.3px;height:102.7px;background:#0a0a0a;border-radius:5.4px;"><span class="t" id="t47" style="left:19.55px;top:22.47px;font-size:18.7px;font-weight:400;color:#888888;letter-spacing:0.271px;-webkit-text-stroke:0.20px #888888;">TOTAL STAKED:</span><strong class="t" id="t48" style="left:20.05px;top:52.44px;font-size:30.2px;font-weight:400;color:#ffffff;letter-spacing:2.083px;-webkit-text-stroke:1.05px #ffffff;">$146.05</strong></div>
<div class="stat" style="left:875.4px;top:1251px;width:267.3px;height:102.7px;background:#0a0a0a;border-radius:5.4px;"><span class="t" id="t49" style="left:19.60px;top:22.47px;font-size:18.7px;font-weight:400;color:#888888;letter-spacing:0.438px;-webkit-text-stroke:0.20px #888888;">WINS:</span><strong class="t" id="t50" style="left:19.35px;top:52.44px;font-size:30.2px;font-weight:400;color:#4cff4c;letter-spacing:2.000px;-webkit-text-stroke:1.05px #4cff4c;">0</strong></div>
<div class="stat" style="left:1167.6px;top:1251px;width:267.3px;height:102.7px;background:#0a0a0a;border-radius:5.4px;"><span class="t" id="t51" style="left:17.40px;top:22.47px;font-size:18.7px;font-weight:400;color:#888888;letter-spacing:0.292px;-webkit-text-stroke:0.20px #888888;">LOSSES:</span><strong class="t" id="t52" style="left:19.15px;top:52.44px;font-size:30.2px;font-weight:400;color:#ff4545;letter-spacing:2.000px;-webkit-text-stroke:1.05px #ff4545;">0</strong></div>
<div class="stat" style="left:1459.8px;top:1251px;width:267.3px;height:102.7px;background:#0a0a0a;border-radius:5.4px;"><span class="t" id="t53" style="left:19.20px;top:22.47px;font-size:18.7px;font-weight:400;color:#888888;letter-spacing:0.188px;-webkit-text-stroke:0.20px #888888;">WIN RATE:</span><strong class="t" id="t54" style="left:19.45px;top:52.44px;font-size:30.2px;font-weight:400;color:#ffffff;letter-spacing:2.500px;-webkit-text-stroke:1.05px #ffffff;">0.0%</strong></div>
<div class="stat" style="left:1752.0px;top:1251px;width:267.3px;height:102.7px;background:#0a0a0a;border-radius:5.4px;"><span class="t" id="t55" style="left:17.50px;top:22.47px;font-size:18.7px;font-weight:400;color:#888888;letter-spacing:0.425px;-webkit-text-stroke:0.20px #888888;">NET PROFIT:</span><strong class="t" id="t56" style="left:20.75px;top:52.44px;font-size:30.2px;font-weight:400;color:#4cff4c;letter-spacing:2.188px;-webkit-text-stroke:1.05px #4cff4c;">$0.00</strong></div>
<div class="stat" style="left:2044.2px;top:1251px;width:267.3px;height:102.7px;background:#0a0a0a;border-radius:5.4px;"><span class="t" id="t57" style="left:17.30px;top:22.47px;font-size:18.7px;font-weight:400;color:#888888;letter-spacing:0.583px;-webkit-text-stroke:0.20px #888888;">ROI:</span><strong class="t" id="t58" style="left:19.05px;top:52.44px;font-size:30.2px;font-weight:400;color:#4cff4c;letter-spacing:2.833px;-webkit-text-stroke:1.05px #4cff4c;">0.0%</strong></div>
<section id="card3" class="card"></section>
<p class="t" id="t59" style="left:476.25px;top:1525.59px;font-size:24.7px;font-weight:400;color:#999999;letter-spacing:0.668px;-webkit-text-stroke:0.35px #999999;">No parlay recommendations found. Click "Show Existing Parlays" to load existing parlays, or click "Generate New Parlays" to create new ones.</p>
<header id="nav"><div id="navbg"></div>
<h1 class="t" id="t60" style="left:201.50px;top:243.56px;font-size:38.8px;font-weight:700;color:#ffffff;letter-spacing:-1.105px;">NFL Parlay Predictor</h1>
<a class="t" id="t61" style="left:1936.65px;top:249.00px;font-size:25.4px;font-weight:400;color:#f0f0f0;letter-spacing:0.721px;-webkit-text-stroke:0.35px #f0f0f0;">Schedule</a>
<a class="t" id="t62" style="left:2097.40px;top:249.00px;font-size:25.4px;font-weight:400;color:#f0f0f0;letter-spacing:0.415px;-webkit-text-stroke:0.35px #f0f0f0;">Parlay Builder</a>
<a class="t" id="t63" style="left:2312.40px;top:249.00px;font-size:25.4px;font-weight:400;color:#f0f0f0;letter-spacing:0.500px;-webkit-text-stroke:0.35px #f0f0f0;">Tracker</a>
</header>
</div>
</div></body></html>
